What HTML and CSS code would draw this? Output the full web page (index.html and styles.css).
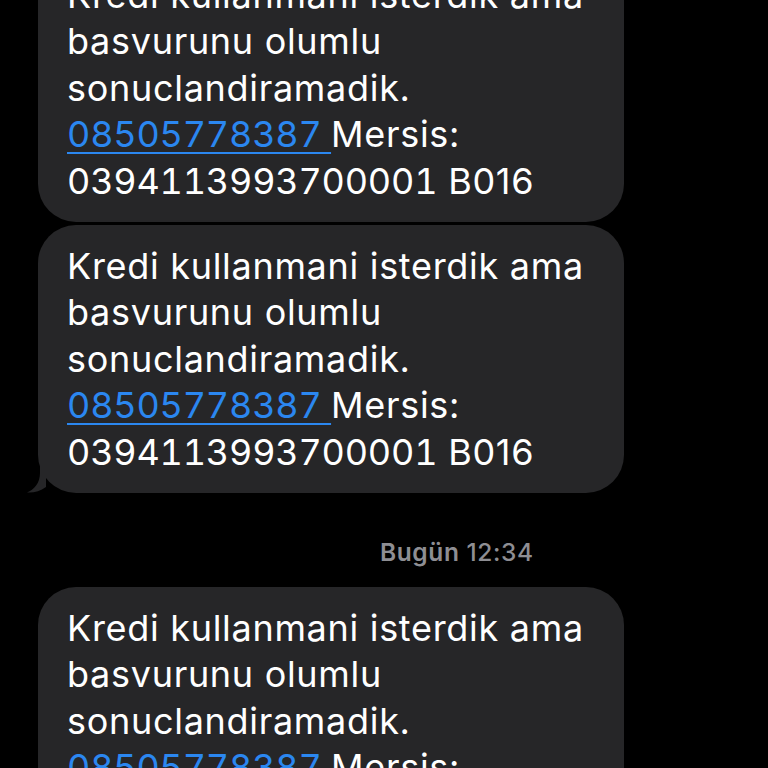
FILE: index.html
```html
<!DOCTYPE html>
<html>
<head>
<meta charset="utf-8">
<link rel="stylesheet" href="styles.css">
</head>
<body>
<div class="thread">
  <div class="bubble">
    <p class="msg">Kredi kullanmani isterdik ama basvurunu olumlu sonuclandiramadik. <a class="link num">08505778387 </a>Mersis: <span class="num">0394113993700001</span> B016</p>
  </div>
  <div class="bubble tailed">
    <p class="msg">Kredi kullanmani isterdik ama basvurunu olumlu sonuclandiramadik. <a class="link num">08505778387 </a>Mersis: <span class="num">0394113993700001</span> B016</p>
    <svg class="tail" width="20" height="30" viewBox="0 0 20 30"><path d="M14 0 L14 10 C14 20 8 27 1 29.5 C8 30 14 28 20 24 L20 0 Z" fill="#262628"/></svg>
  </div>
  <div class="stamp"><span class="day">Bugün</span> 12:34</div>
  <div class="bubble">
    <p class="msg">Kredi kullanmani isterdik ama basvurunu olumlu sonuclandiramadik. <a class="link num">08505778387 </a>Mersis: <span class="num">0394113993700001</span> B016</p>
  </div>
</div>
</body>
</html>
```

FILE: styles.css
```css
html, body {
  margin: 0;
  padding: 0;
  background: #000;
  overflow: hidden;
}
.thread {
  display: flex;
  flex-direction: column;
  align-items: flex-start;
  gap: 3px;
  margin-top: -46px;
  padding-left: 38px;
}
.bubble {
  position: relative;
  width: 586px;
  box-sizing: border-box;
  background: #262628;
  border-radius: 38px;
  padding: 18px 10px 18px 29px;
}
.msg {
  margin: 0;
  font-family: Inter, "Liberation Sans", sans-serif;
  font-size: 36px;
  line-height: 46.4px;
  color: #fff;
  letter-spacing: 0.7px;
}
.num {
  font-variant-numeric: tabular-nums;
  letter-spacing: -0.2px;
}
.link {
  color: #2b87f0;
  text-decoration: underline;
  text-decoration-thickness: 2px;
  text-underline-offset: 5px;
}
.tail {
  position: absolute;
  left: -12px;
  bottom: 0;
}
.stamp {
  margin: 42px 0 18px 342px;
  font-family: Inter, "Liberation Sans", sans-serif;
  font-size: 24.5px;
  line-height: 28px;
  font-weight: 500;
  color: #8e8e93;
  letter-spacing: 0.6px;
}
.day {
  font-weight: 600;
}
```
